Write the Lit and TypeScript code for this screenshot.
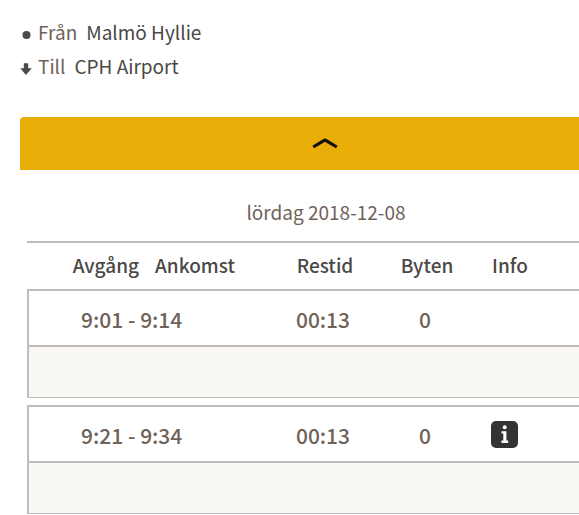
import { LitElement, html, css } from "lit";
import { customElement, property } from "lit/decorators.js";

interface Journey {
  departure: string;
  arrival: string;
  duration: string;
  changes: number;
  hasInfo: boolean;
}

@customElement("app-root")
export class AppRoot extends LitElement {
  static styles = css`
    :host {
      display: block;
      overflow-x: hidden;
      background: #fff;
      color: #6f6259;
      font-family: "Noto Sans CJK SC", "Noto Sans", sans-serif;
      font-size: 19px;
      line-height: 34px;
    }
    .route {
      margin: 0;
      padding: 15px 20px 0;
    }
    .stop {
      display: flex;
      align-items: center;
    }
    .marker {
      flex: none;
      width: 12px;
      height: 14px;
      margin-right: 6px;
      padding-top: 6px;
      fill: #4a4a4a;
    }
    .place {
      margin: 0 0 0 9px;
      color: #4b4845;
    }
    .results {
      margin: 34px 0 0 20px;
    }
    .toggle {
      display: flex;
      align-items: center;
      justify-content: center;
      box-sizing: border-box;
      width: 100%;
      height: 53px;
      padding: 0 0 0 51px;
      border: 0;
      border-radius: 4px 0 0 0;
      background: #e9ad08;
      cursor: pointer;
    }
    .chevron {
      width: 28px;
      height: 14px;
      fill: none;
      stroke: #111;
      stroke-width: 3.2;
    }
    .timetable {
      width: calc(100% - 7px);
      margin-left: 7px;
      table-layout: fixed;
      border-spacing: 0;
    }
    .date {
      padding: 25px 0 12px 46px;
      text-align: center;
    }
    th,
    td {
      box-sizing: border-box;
      padding: 0;
      text-align: center;
    }
    th {
      height: 48px;
      padding-bottom: 2px;
      border-top: 2px solid #c0bcb9;
      color: #4b4845;
      font-weight: 500;
    }
    .col-departure { width: 120px; }
    .col-arrival { width: 128px; }
    .col-duration { width: 100px; }
    .col-changes { width: 104px; }
    .col-info { width: 62px; }
    .head-departure {
      padding-right: 8px;
      text-align: right;
    }
    .head-arrival {
      padding-left: 8px;
      text-align: left;
    }
    .summary td {
      height: 56px;
      padding-top: 2px;
      padding-right: 4px;
      border-top: 2px solid #c0bcb9;
      font-size: 21px;
      font-weight: 500;
    }
    .summary .times {
      padding-left: 52px;
      border-left: 2px solid #c0bcb9;
      text-align: left;
    }
    .summary .info {
      padding-top: 0;
      padding-right: 12px;
    }
    .details td {
      height: 53px;
      border: solid #c0bcb9;
      border-width: 2px 0 1px 2px;
      background: #f9f7f3;
    }
    .gap td {
      height: 7px;
    }
    .info-button {
      display: block;
      width: 27px;
      height: 27px;
      margin: 0 auto;
      padding: 0;
      border: 0;
      border-radius: 5px;
      background: #333;
      cursor: pointer;
    }
    .info-icon {
      display: block;
      width: 27px;
      height: 27px;
      fill: #fff;
    }
  `;

  @property({ attribute: false })
  journeys: Journey[] = [
    { departure: "9:01", arrival: "9:14", duration: "00:13", changes: 0, hasInfo: false },
    { departure: "9:21", arrival: "9:34", duration: "00:13", changes: 0, hasInfo: true },
  ];

  private infoButton() {
    return html`<button class="info-button" type="button" aria-label="Info">
      <svg class="info-icon" viewBox="0 0 27 27" aria-hidden="true">
        <circle cx="13.7" cy="6.3" r="2" />
        <path d="M10.5 10.2H15.4V19.6H17.2V22H10.5V19.6H12.3V12.5H10.5Z" />
      </svg>
    </button>`;
  }

  private journeyRows(journey: Journey, index: number) {
    return html`
      <tbody>
        ${index > 0 ? html`<tr class="gap"><td colspan="6"></td></tr>` : ""}
        <tr class="summary">
          <td class="times" colspan="2">${journey.departure} - ${journey.arrival}</td>
          <td>${journey.duration}</td>
          <td>${journey.changes}</td>
          <td class="info">${journey.hasInfo ? this.infoButton() : ""}</td>
          <td></td>
        </tr>
        <tr class="details"><td colspan="6"></td></tr>
      </tbody>
    `;
  }

  render() {
    return html`
      <dl class="route">
        <div class="stop">
          <svg class="marker" viewBox="0 0 12 14" aria-hidden="true">
            <circle cx="6.5" cy="7" r="4" />
          </svg>
          <dt>Från</dt>
          <dd class="place">Malmö Hyllie</dd>
        </div>
        <div class="stop">
          <svg class="marker" viewBox="0 0 12 14" aria-hidden="true">
            <path d="M3.8 1.3H8.2V6.3H11.8L6 13L0.2 6.3H3.8Z" />
          </svg>
          <dt>Till</dt>
          <dd class="place">CPH Airport</dd>
        </div>
      </dl>
      <section class="results">
        <button class="toggle" type="button" aria-label="Visa tidigare resor">
          <svg class="chevron" viewBox="0 0 28 14" aria-hidden="true">
            <path d="M2.2 10L12.8 3.6Q14 2.8 15.2 3.6L25.8 10" />
          </svg>
        </button>
        <table class="timetable">
          <caption class="date">lördag 2018-12-08</caption>
          <colgroup>
            <col class="col-departure" />
            <col class="col-arrival" />
            <col class="col-duration" />
            <col class="col-changes" />
            <col class="col-info" />
            <col />
          </colgroup>
          <thead>
            <tr>
              <th class="head-departure" scope="col">Avgång</th>
              <th class="head-arrival" scope="col">Ankomst</th>
              <th scope="col">Restid</th>
              <th scope="col">Byten</th>
              <th scope="col">Info</th>
              <th></th>
            </tr>
          </thead>
          ${this.journeys.map((journey, index) => this.journeyRows(journey, index))}
        </table>
      </section>
    `;
  }
}
